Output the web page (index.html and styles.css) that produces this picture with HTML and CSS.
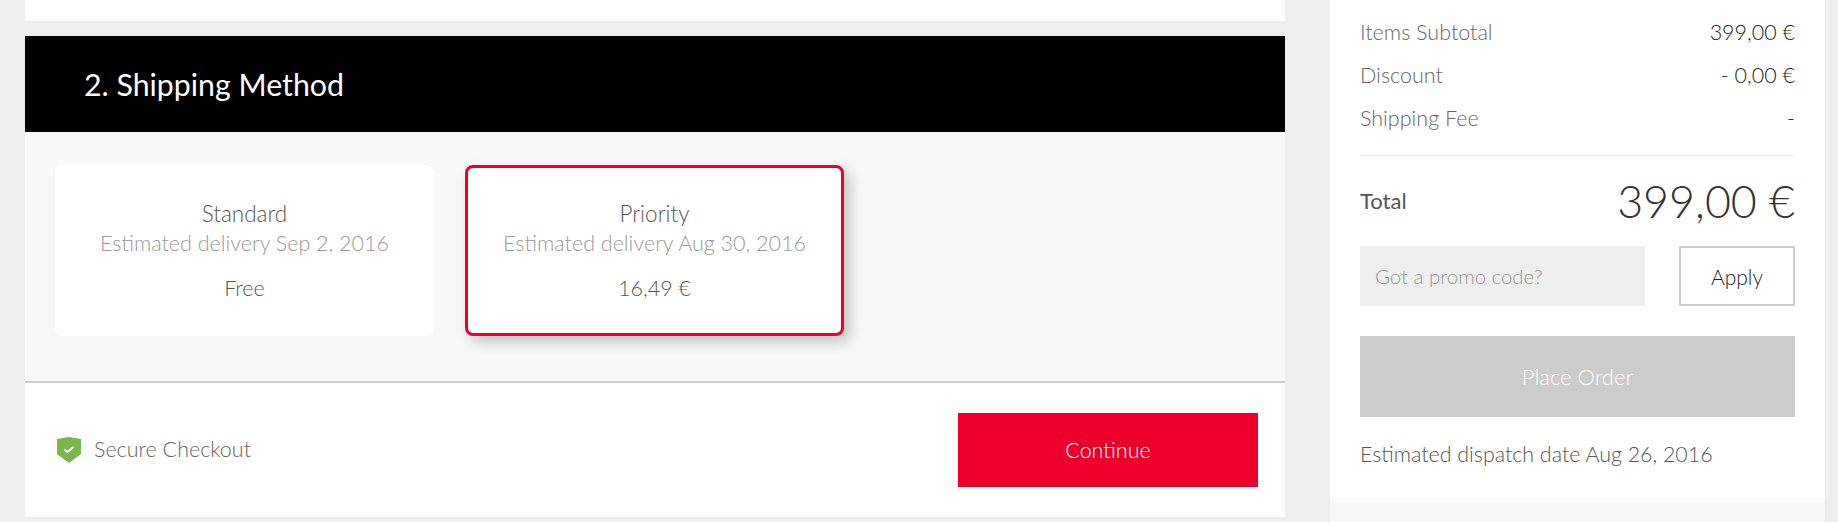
FILE: index.html
```html
<!DOCTYPE html>
<html>
<head>
    <title>Checkout</title>
    <meta name="viewport" content="width=device-width, initial-scale=1.0">
    <link rel="stylesheet" href="styles.css">
</head>
<body>
    <div class="page">
        <div class="main">
            <div class="prev-step"></div>
            <div class="step">
                <h2 class="step-title">2. Shipping Method</h2>
                <div class="methods">
                    <div class="method">
                        <div class="method-name">Standard</div>
                        <div class="method-date">Estimated delivery Sep 2, 2016</div>
                        <div class="method-price">Free</div>
                    </div>
                    <div class="method selected">
                        <div class="method-name">Priority</div>
                        <div class="method-date">Estimated delivery Aug 30, 2016</div>
                        <div class="method-price">16,49 €</div>
                    </div>
                </div>
                <div class="step-footer">
                    <div class="secure">
                        <svg class="shield" width="24" height="26" viewBox="0 0 24 26">
                            <path d="M0 2 Q6 1 12 0 Q18 1 24 2 V17 L12 26 L0 17 Z" fill="#7ab648"/>
                            <path d="M7.5 12.5 L10.5 15 L16.5 10" fill="none" stroke="#fff" stroke-width="2"/>
                        </svg>
                        <span>Secure Checkout</span>
                    </div>
                    <button class="continue">Continue</button>
                </div>
            </div>
        </div>
        <div class="sidebar">
            <div class="summary">
                <div class="row"><span>Items Subtotal</span><span class="value">399,00 €</span></div>
                <div class="row"><span>Discount</span><span class="value">- 0,00 €</span></div>
                <div class="row"><span>Shipping Fee</span><span class="value">-</span></div>
                <div class="total">
                    <span class="total-label">Total</span>
                    <span class="total-value">399,00 €</span>
                </div>
                <div class="promo">
                    <input class="promo-input" type="text" placeholder="Got a promo code?">
                    <button class="apply">Apply</button>
                </div>
                <button class="place-order">Place Order</button>
                <div class="dispatch">Estimated dispatch date Aug 26, 2016</div>
            </div>
        </div>
    </div>
</body>
</html>
```

FILE: styles.css
```css
* {
    box-sizing: border-box;
}
html, body {
    height: 100%;
}
body {
    margin: 0;
    background: #eeeeee;
    font-family: Lato, Arial, sans-serif;
    font-weight: 300;
    font-size: 21.5px;
    overflow: hidden;
}
button, input {
    font-family: inherit;
    font-weight: 300;
    font-size: 21.5px;
    border: none;
}
.page {
    display: flex;
    height: 522px;
    padding-left: 25px;
}
.main {
    width: 1260px;
}
.prev-step {
    height: 21px;
    background: white;
    margin-bottom: 15px;
}
.step {
    background: white;
}
.step-title {
    margin: 0;
    height: 96px;
    padding: 0 59px;
    background: black;
    color: white;
    font-size: 30.3px;
    font-weight: 400;
    line-height: 97px;
}
.methods {
    display: flex;
    gap: 31px;
    height: 251px;
    padding: 33px 30px 0;
    background: #f8f8f8;
    border-bottom: 2px solid #cccccc;
}
.method {
    width: 379px;
    height: 171px;
    padding-top: 33px;
    background: white;
    border-radius: 8px;
    text-align: center;
    line-height: 30px;
}
.method.selected {
    padding-top: 30px;
    border: 3px solid #ec0029;
    box-shadow: 6px 6px 14px rgba(0, 0, 0, 0.22);
}
.method-name {
    margin-bottom: -2px;
    color: #555;
    font-size: 22.5px;
    line-height: 32px;
}
.method-date {
    color: #999;
}
.method-price {
    margin-top: 15px;
    color: #555;
}
.step-footer {
    display: flex;
    justify-content: space-between;
    align-items: center;
    height: 134px;
    padding: 0 27px 0 32px;
}
.secure {
    display: flex;
    align-items: center;
    gap: 13px;
    color: #666;
}
.secure span {
    margin-top: -2px;
}
.continue {
    width: 300px;
    height: 74px;
    background: #ec0029;
    color: white;
    font-size: 21.5px;
}
.sidebar {
    width: 495px;
    margin-left: 45px;
    background: #f8f8f8;
}
.summary {
    height: 498px;
    padding: 11px 30px 0;
    background: white;
}
.row {
    display: flex;
    justify-content: space-between;
    line-height: 43px;
    color: #666;
}
.row .value {
    color: #222;
}
.total {
    display: flex;
    justify-content: space-between;
    align-items: center;
    height: 91px;
    margin-top: 15px;
    border-top: 1px solid #eeeeee;
}
.total-label {
    margin-top: -2px;
    color: #555;
    font-weight: 400;
    font-size: 22px;
}
.total-value {
    font-size: 44.8px;
    color: #333;
}
.promo {
    display: flex;
    justify-content: space-between;
}
.promo-input {
    width: 285px;
    height: 60px;
    padding: 0 15px;
    background: #eeeeee;
    font-size: 20.4px;
}
.promo-input::placeholder {
    color: #999;
    opacity: 1;
}
.apply {
    width: 116px;
    height: 60px;
    background: white;
    border: 2px solid #cccccc;
    color: #222;
    font-size: 21px;
}
.place-order {
    display: block;
    width: 100%;
    height: 81px;
    margin-top: 30px;
    background: #cccccc;
    color: white;
    font-size: 22px;
}
.dispatch {
    margin-top: 22px;
    line-height: 30px;
    color: #555;
    font-size: 21.4px;
}
```
